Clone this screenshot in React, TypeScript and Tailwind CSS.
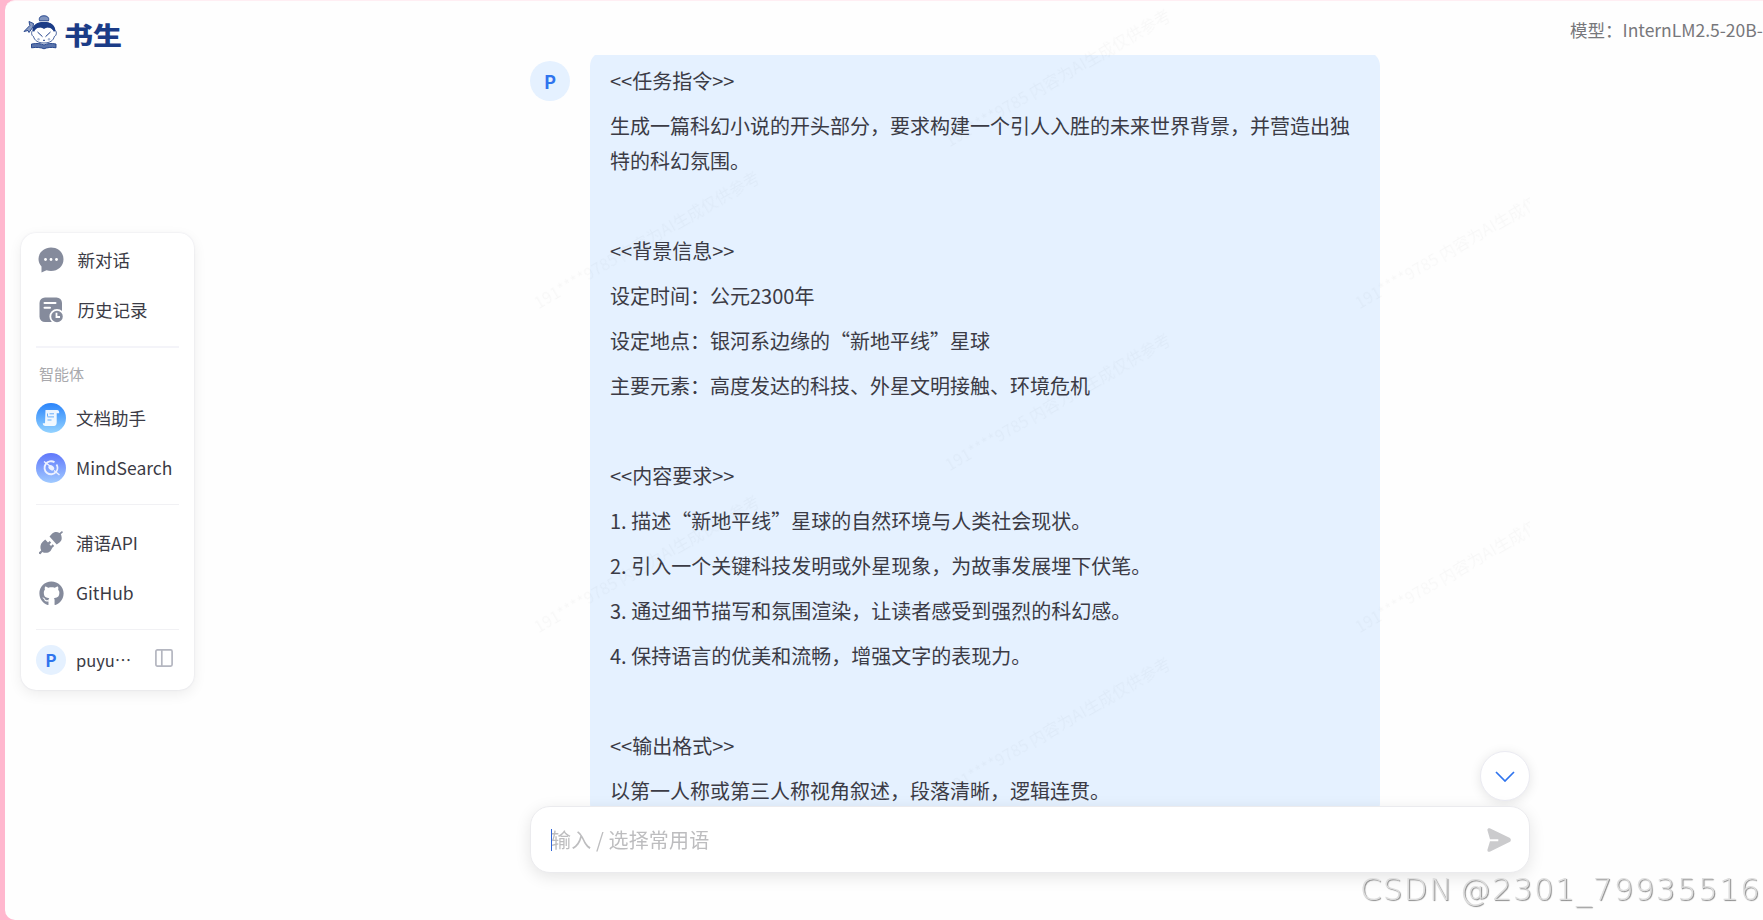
import React from "react";
import { FaGithub } from "react-icons/fa";

const messageLines = [
  "<<任务指令>>",
  "生成一篇科幻小说的开头部分，要求构建一个引人入胜的未来世界背景，并营造出独特的科幻氛围。",
  "",
  "<<背景信息>>",
  "设定时间：公元2300年",
  "设定地点：银河系边缘的“新地平线”星球",
  "主要元素：高度发达的科技、外星文明接触、环境危机",
  "",
  "<<内容要求>>",
  "1. 描述“新地平线”星球的自然环境与人类社会现状。",
  "2. 引入一个关键科技发明或外星现象，为故事发展埋下伏笔。",
  "3. 通过细节描写和氛围渲染，让读者感受到强烈的科幻感。",
  "4. 保持语言的优美和流畅，增强文字的表现力。",
  "",
  "<<输出格式>>",
  "以第一人称或第三人称视角叙述，段落清晰，逻辑连贯。",
];

// left/bottom origin of every rotated watermark, relative to the chat column
const watermarks = [
  { x: 10, y: 312 },
  { x: 10, y: 636 },
  { x: 421, y: 150 },
  { x: 421, y: 474 },
  { x: 421, y: 798 },
  { x: 831, y: 312 },
  { x: 831, y: 636 },
];

const LogoMark = () => (
  <svg width="34" height="35" viewBox="0 0 34 35" fill="none">
    <path d="M9.500 15C9.500 9.500 15 7 21 7S32 9.500 32.500 16L31 17C30 13.500 27 12 24 12.200L21 13.500 18 12.200C14.500 12 12 13.500 11 17Z" fill="#1b3c87" />
    <path d="M16.500 5.800C15.500 2 18 .8 21 .8s5.500 1.500 4.500 5Z" fill="#7f94bf" stroke="#1b3c87" strokeWidth=".9" />
    <path d="M10.500 8.500 6 6.500 6.800 10.500 1 16.500 5 15.500 6 17.500 10 12Z" fill="#8b9dc4" stroke="#1b3c87" strokeWidth=".9" />
    <path d="M10.500 15.500C8 15 8 21 10.500 21.500 11.500 25.500 15 28 21 28s9.500-2.500 10.300-6.500C34 21 34 15 31.500 15.500" fill="white" stroke="#1b3c87" strokeWidth=".8" />
    <path d="M9.800 15.500C10 9.500 15 7 21 7S31.500 9.500 32.200 15.500L31 17C30 13.500 27 12.300 24 12.500L21 13.800 18 12.500C14.500 12.300 12 13.500 11 17Z" fill="#1b3c87" />
    <path d="M14.500 17 19.500 21.700M27.500 17 22.500 21.700M20 25.300h2" stroke="#1b3c87" strokeWidth="1" />
    <circle cx="15.500" cy="24.300" r="1.200" fill="#a8b6d3" />
    <circle cx="26" cy="24.300" r="1.200" fill="#a8b6d3" />
    <path d="M8.500 29C14 28 18 28.500 21 30 24 28.500 28 28 33 29V32.800C28 32 24 32.500 21 33.800 18 32.500 14 32 8.500 32.800Z" fill="#5a74ab" stroke="#1b3c87" strokeWidth=".9" />
  </svg>
);

const ChatIcon = () => (
  <svg width="26" height="26" viewBox="0 0 26 26">
    <path d="M13 .5C6 .5.500 5.600.500 12c0 2.800 1 5.200 3 7.500V25.500L8.500 23.200c1.500.6 3 .8 4.500.8 7 0 12.500-5 12.500-11.800S20 .5 13 .5Z" fill="#858b9c" />
    <circle cx="7.500" cy="12.500" r="1.400" fill="white" />
    <circle cx="13" cy="12.500" r="1.400" fill="white" />
    <circle cx="18.500" cy="12.500" r="1.400" fill="white" />
  </svg>
);

const HistoryIcon = () => (
  <svg width="26" height="26" viewBox="0 0 26 26">
    <rect x="1.500" y=".5" width="22.500" height="24.500" rx="5.500" fill="#858b9c" />
    <path d="M6.500 6h11M6.500 10.700h5.500" stroke="white" strokeWidth="2" strokeLinecap="round" />
    <circle cx="19" cy="19.500" r="6.700" fill="#858b9c" stroke="white" strokeWidth="1.800" />
    <path d="M18.500 15.800v4.200h3.500" stroke="white" strokeWidth="1.800" fill="none" />
  </svg>
);

const DocIcon = () => (
  <svg width="30" height="30" viewBox="0 0 30 30">
    <defs>
      <linearGradient id="docBg" x1="0" y1="0" x2="0" y2="1">
        <stop stopColor="#2a84fb" />
        <stop offset="1" stopColor="#94d3ff" />
      </linearGradient>
    </defs>
    <circle cx="15" cy="15" r="15" fill="url(#docBg)" />
    <path d="M9.500 7h11.500c2 0 2.200 1.500 2.200 3.200H20.700V19.500c0 2.300-1 3.500-2.700 3.500H9.500c-1.800 0-2.700-1-2.700-2.700H9Z" fill="white" fillOpacity=".9" />
    <path d="M11.500 10.500v3M13.500 10.800h4.500M11.500 13.900h6.500M11.500 17h4" stroke="#69aefc" strokeWidth="1" fill="none" />
  </svg>
);

const MindSearchIcon = () => (
  <svg width="30" height="30" viewBox="0 0 30 30" fill="none">
    <defs>
      <linearGradient id="mindBg" x1="0" y1="0" x2="0" y2="1">
        <stop stopColor="#6077fb" />
        <stop offset="1" stopColor="#a0caff" />
      </linearGradient>
    </defs>
    <circle cx="15" cy="15" r="15" fill="url(#mindBg)" />
    <path d="M18.500 9.300A6.500 6.500 0 1 0 20 19" stroke="#edf1ff" strokeWidth="1.900" />
    <path d="M20.500 11.500A6.500 6.500 0 0 1 20 19" stroke="#edf1ff" strokeWidth="1.700" />
    <path d="M8 8.500 14 13M18 17.500l5.500 4.500" stroke="#edf1ff" strokeWidth="1.400" />
    <ellipse cx="15.300" cy="14.800" rx="3.200" ry="2.300" transform="rotate(40 15.300 14.800)" fill="#edf1ff" />
  </svg>
);

const PlugIcon = () => (
  <svg width="24" height="24" viewBox="0 0 24 24" fill="#858b9c">
    <path d="M23 0 24 1.300 21.800 3.300C23.500 7 22.800 10 20.500 11.500L17.700 13.500 10.500 5.500 13 2.800C15 .8 18 .5 20.500 2Z" />
    <path d="M3.500 11 6.200 8.500 9 11.600 10.700 10 12.200 11.700 10.500 13.300 12 15 13.700 13.300 15.200 15 13.500 16.500 11.500 20C9.500 22 6 22.500 3.300 21L1.500 23.200 0 22.800 0 21.300 2.200 19.500C.800 16.500 1.300 13 3.500 11Z" />
  </svg>
);

const SendIcon = () => (
  <svg width="24" height="24" viewBox="0 0 24 24">
    <path d="M.500 2.500C0 .8 1.500-.3 3.300.500L22.500 9.800c1.800 1 1.800 3.200 0 4.200L3.300 23.500C1.500 24.300 0 23.200.500 21.500L3 13.200h8.300v-2H3Z" fill="#cbcbcd" />
  </svg>
);

const NavItem = ({ icon, label, className = "gap-[10px] text-[17.5px]" }: { icon: React.ReactNode; label: string; className?: string }) => (
  <div className={`flex h-[50px] items-center ${className}`}>
    <div className="flex w-[30px] justify-center">{icon}</div>
    <span className="whitespace-nowrap">{label}</span>
  </div>
);

const Sidebar = () => (
  <aside className="mt-[174px] ml-4 h-[457px] w-[173px] rounded-[15px] bg-white px-[15px] shadow-[0_4px_14px_rgba(0,0,0,0.07),0_0_2px_rgba(60,60,120,0.12)]">
    <div className="pt-[2px]">
      <NavItem icon={<ChatIcon />} label="新对话" className="gap-[11.5px] text-[17.5px]" />
      <NavItem icon={<HistoryIcon />} label="历史记录" className="gap-[11.5px] text-[17.5px]" />
    </div>
    <div className="mt-[11px] h-[2px] bg-[#f4f4f9]" />
    <div className="mt-[13px] pl-[3px] text-[15px] leading-[26px] text-[#a9a9ad]">智能体</div>
    <div className="mt-[6px]">
      <NavItem icon={<DocIcon />} label="文档助手" />
      <NavItem icon={<MindSearchIcon />} label="MindSearch" />
    </div>
    <div className="mt-[11px] h-px bg-[#f1f1f4]" />
    <div className="mt-[13px]">
      <NavItem icon={<PlugIcon />} label="浦语API" />
      <NavItem icon={<FaGithub className="h-[25px] w-[25px] text-[#858b9c]" />} label="GitHub" />
    </div>
    <div className="mt-[11px] h-px bg-[#f1f1f4]" />
    <div className="mt-[5px] flex items-center justify-between pr-[6px]">
      <NavItem
        icon={
          <div className="flex h-[30px] w-[30px] items-center justify-center rounded-full bg-[#e5f1ff] text-[17px] font-bold text-[#2f74ee]">P</div>
        }
        label="puyu…"
        className="gap-[10px] text-[16.5px]"
      />
      <svg width="18" height="18" viewBox="0 0 18 18" fill="none" stroke="#b4b6c0" strokeWidth="1.700" className="-mt-1">
        <rect x=".9" y=".9" width="16.200" height="16.200" rx="1.500" />
        <path d="M6.800 1v16" />
      </svg>
    </div>
  </aside>
);

const Message = () => (
  <div className="flex h-[751px] items-start overflow-hidden">
    <div className="mt-[6px] flex h-10 w-10 shrink-0 items-center justify-center rounded-full bg-[#e5f1ff] text-[18px] font-bold text-[#2f74ee]">P</div>
    <div className="-mt-[4px] ml-5 w-[790px] rounded-[15px] bg-[#e5f1ff] px-5 pt-[12px] text-[20px] leading-[35px] text-[#3b3b45]">
      {messageLines.map((line, i) => (
        <p key={i} className="mb-[10px] min-h-[35px]">{line}</p>
      ))}
    </div>
  </div>
);

export default function App() {
  return (
    <div lang="zh-CN" className="h-[920px] w-full overflow-hidden bg-[#ffb7ce] pl-[5px] font-['Noto_Sans_CJK_SC',sans-serif] text-[#3b3b45]">
      <div className="relative flex h-full flex-col rounded-l-[10px] border-t border-[#ffeef3] bg-[#fefefe]">
        <div className="flex min-h-0 flex-1">
          <div className="w-[525px] shrink-0">
            <div className="flex h-[58px] items-start pt-[14px] pl-[18px]">
              <LogoMark />
              <span className="ml-[7px] origin-center scale-y-[0.85] text-[29px] leading-[38px] font-black text-[#1b3c87]">书生</span>
            </div>
            <Sidebar />
          </div>

          <main className="relative w-[1000px] shrink-0 overflow-visible">
            <div className="h-[54px]" />
            <Message />
            <div className="relative z-10 flex h-[67px] items-center justify-between rounded-[20px] border border-[#ebebee] bg-white pr-[18px] pl-5 shadow-[0_4px_16px_rgba(0,0,0,0.1)]">
              <div className="flex items-center">
                <span className="-mr-px h-[22px] w-px bg-[#2f64d8]" />
                <span className="pt-px text-[20px] tracking-[0.15px] text-[#bdbdbf]">输入 / 选择常用语</span>
              </div>
              <SendIcon />
            </div>

            <div className="pointer-events-none absolute inset-0 overflow-hidden">
              {watermarks.map((mark) => (
                <span
                  key={`${mark.x}-${mark.y}`}
                  className="absolute origin-bottom-left -rotate-30 whitespace-nowrap text-[16.2px] leading-5 text-black/[0.027] will-change-transform"
                  style={{ left: mark.x, top: mark.y - 21 }}
                >
                  191****9785 内容为AI生成仅供参考
                </span>
              ))}
            </div>

            <button className="absolute top-[750px] right-0 flex h-[50px] w-[50px] items-center justify-center rounded-full border border-[#ebebf2] bg-white shadow-[0_2px_12px_rgba(0,0,0,0.1)]">
              <svg width="20" height="11" viewBox="0 0 20 11" fill="none" stroke="#2f74ee" strokeWidth="1.700">
                <path d="m1 1 9 9 9-9" />
              </svg>
            </button>
          </main>

          <div className="mt-[15px] ml-[40px] text-[17.5px] leading-[28px] whitespace-nowrap text-[#77777b]">模型：InternLM2.5-20B-</div>
        </div>

        <div className="absolute right-[2px] bottom-[9px] z-20 font-['DejaVu_Sans',sans-serif] text-[31px] leading-[44px] font-extralight tracking-[1.3px] whitespace-nowrap text-[#dedede] [text-shadow:1px_1px_1px_#888] [word-spacing:-5px]">
          CSDN @2301_79935516
        </div>
      </div>
    </div>
  );
}
